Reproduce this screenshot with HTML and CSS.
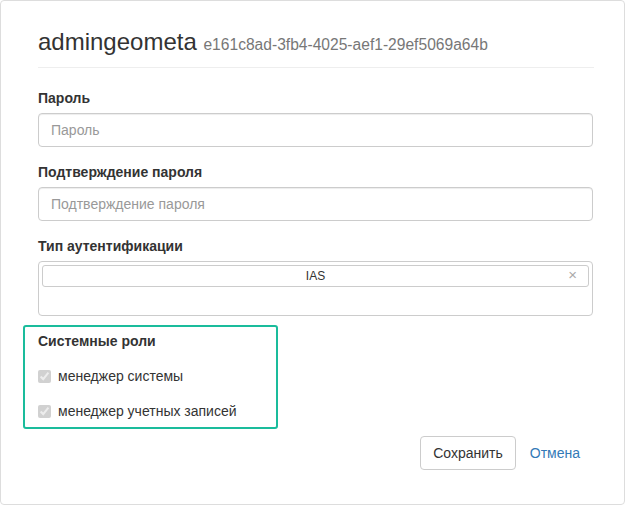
FILE: index.html
```html
<!DOCTYPE html>
<html lang="ru">
<head>
<meta charset="utf-8">
<title>admingeometa</title>
<link rel="stylesheet" href="styles.css">
</head>
<body>
<div class="panel">
  <div class="page-header">
    <h3 class="title">admingeometa <small class="uid">e161c8ad-3fb4-4025-aef1-29ef5069a64b</small></h3>
  </div>
  <form class="form">
    <div class="form-group">
      <label class="label">Пароль</label>
      <input class="input" type="password" placeholder="Пароль">
    </div>
    <div class="form-group">
      <label class="label">Подтверждение пароля</label>
      <input class="input" type="password" placeholder="Подтверждение пароля">
    </div>
    <div class="form-group-select">
      <label class="label">Тип аутентификации</label>
      <div class="multi-select">
        <div class="tag"><span class="tag-text">IAS</span><span class="tag-remove">×</span></div>
      </div>
    </div>
    <div class="roles">
      <div class="label">Системные роли</div>
      <label class="check-row"><input class="check" type="checkbox" checked disabled><span>менеджер системы</span></label>
      <label class="check-row"><input class="check" type="checkbox" checked disabled><span>менеджер учетных записей</span></label>
    </div>
    <div class="actions">
      <button type="button" class="btn">Сохранить</button>
      <a class="btn-link" href="#">Отмена</a>
    </div>
  </form>
</div>
</body>
</html>
```
FILE: styles.css
```css
* { box-sizing: border-box; }
html, body {
  margin: 0;
  padding: 0;
  background: #fff;
}
body {
  font-family: "Liberation Sans", Arial, sans-serif;
  font-size: 14px;
  line-height: 20px;
  color: #333;
}
.panel {
  width: 625px;
  height: 505px;
  border: 1px solid #ddd;
  border-radius: 4px;
  padding: 28px 30px 0 37px;
}
.page-header {
  padding-bottom: 9px;
  border-bottom: 1px solid #eee;
  margin-bottom: 20px;
}
.title {
  margin: 0;
  font-size: 24px;
  line-height: 26px;
  font-weight: 500;
  color: #333;
}
.uid {
  font-size: 15.6px;
  color: #777;
  font-weight: 400;
}
.form { display: block; }
.form-group { margin-bottom: 15px; }
.form-group-select { margin-bottom: 9px; }
.label {
  display: block;
  font-weight: 700;
  margin-bottom: 5px;
  line-height: 20px;
}
.input {
  display: block;
  width: 555px;
  height: 34px;
  padding: 6px 12px;
  font: inherit;
  font-size: 14px;
  color: #555;
  border: 1px solid #ccc;
  border-radius: 4px;
  box-shadow: inset 0 1px 1px rgba(0,0,0,.075);
  background: #fff;
}
.input::placeholder { color: #999; }
.multi-select {
  width: 555px;
  height: 55px;
  border: 1px solid #ccc;
  border-radius: 4px;
  padding: 3px;
  background: #fff;
}
.tag {
  position: relative;
  height: 22px;
  border: 1px solid #ccc;
  border-radius: 3px;
  display: flex;
  align-items: center;
  justify-content: center;
  font-size: 12px;
  color: #333;
}
.tag-remove {
  position: absolute;
  right: 11px;
  top: 0;
  line-height: 18px;
  font-size: 15px;
  color: #aaa;
}
.roles {
  margin-left: -15px;
  width: 255px;
  border: 2px solid #1abc9c;
  border-radius: 3px;
  padding: 4px 13px 6px 13px;
}
.roles .label { margin-bottom: 15px; }
.check-row {
  display: flex;
  align-items: center;
  height: 20px;
  gap: 7px;
  margin-bottom: 15px;
  color: #333;
}
.check-row:last-child { margin-bottom: 0; }
.check {
  width: 13px;
  height: 13px;
  margin: 0;
}
.actions {
  display: flex;
  justify-content: flex-end;
  align-items: center;
  margin-top: 7px;
  padding-right: 2px;
}
.btn {
  height: 34px;
  padding: 6px 12px;
  font: inherit;
  font-size: 14px;
  color: #333;
  background: #fff;
  border: 1px solid #ccc;
  border-radius: 4px;
}
.btn-link {
  margin-left: 2px;
  padding: 6px 12px;
  color: #337ab7;
  text-decoration: none;
}
```
